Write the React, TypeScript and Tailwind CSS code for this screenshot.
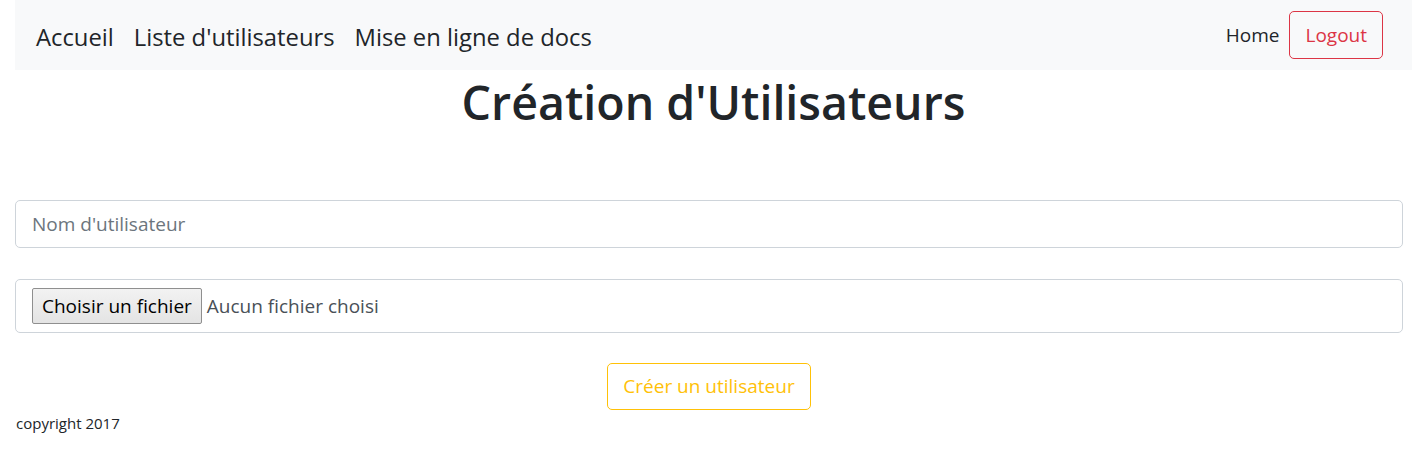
export default function App() {
  return (
    <div className="px-[15px] text-[#212529] [font-family:'Open_Sans',sans-serif] bg-white min-h-[464px]">
      <nav className="flex items-center justify-between bg-[#f8f9fa] h-[70px] pl-[21px] pr-[29px]">
        <div className="flex items-center pt-[5px]">
          <a className="text-[23.8px] leading-[37.5px] mr-[20px]">Accueil</a>
          <a className="text-[23.8px] leading-[37.5px] mr-[20px]">Liste d'utilisateurs</a>
          <a className="text-[23.8px] leading-[37.5px]">Mise en ligne de docs</a>
        </div>
        <div className="flex items-center">
          <a className="text-[19px] px-[10px] pt-[1px]">Home</a>
          <button className="h-[48px] px-[15px] text-[19px] text-[#dc3545] border border-[#dc3545] rounded-[5px]">
            Logout
          </button>
        </div>
      </nav>

      <h1 className="text-center text-[46.5px] font-semibold leading-[60px] mb-[10px] pt-[2px]">Création d'Utilisateurs</h1>

      <form className="pr-[9px] pt-[58px]">
        <input
          type="text"
          placeholder="Nom d'utilisateur"
          className="block w-full h-[48px] px-[16px] text-[19px] border border-[#ced4da] rounded-[5px] placeholder:text-[#6c757d] outline-none"
        />

        <div className="flex items-center w-full h-[54px] mt-[31px] px-[16px] border border-[#ced4da] rounded-[5px] text-[19px]">
          <span className="h-[36px] px-[9px] flex items-center bg-gradient-to-b from-[#f2f2f2] to-[#e4e4e4] border border-[#8f8f8f] rounded-[2px] text-black">
            Choisir un fichier
          </span>
          <span className="ml-[5px] text-[#495057]">Aucun fichier choisi</span>
        </div>

        <div className="flex justify-center mt-[30px]">
          <button
            type="button"
            className="h-[47px] px-[15px] text-[19px] text-[#ffc107] border border-[#ffc107] rounded-[5px]"
          >
            Créer un utilisateur
          </button>
        </div>
      </form>

      <footer className="text-[15px] pt-[2px] pl-[1px]">copyright 2017</footer>
    </div>
  );
}
